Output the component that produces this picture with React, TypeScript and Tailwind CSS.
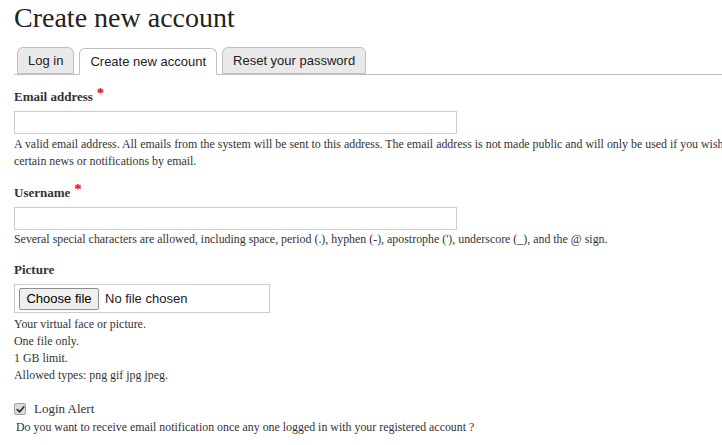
import React from 'react';

const serif = { fontFamily: '"Liberation Serif", "Times New Roman", serif' };

const Label: React.FC<{ text: string; required?: boolean }> = ({ text, required }) => (
  <div className="text-[13px] leading-[18px] font-bold text-[#333]">
    {text}
    {required && <span className="ml-[4px] text-[15px] text-[#e00] relative top-[-3px]">*</span>}
  </div>
);

const Tab: React.FC<{ label: string; active?: boolean }> = ({ label, active }) => (
  <div
    className={
      'h-[27px] px-[10px] flex items-center rounded-t-[6px] border border-[#bfbfbf] text-[13px] text-[#222] ' +
      (active ? 'bg-white border-b-white relative top-[1px]' : 'bg-[#e9e9e9]')
    }
    style={{ fontFamily: '"Liberation Sans", Arial, sans-serif' }}
  >
    {label}
  </div>
);

export default function App() {
  return (
    <div className="w-[722px] h-[445px] overflow-hidden bg-white text-[#333]" style={serif}>
      <div className="w-[955px] pl-[14px]">
        <h1 className="text-[28px] leading-[31px] text-[#222] pt-[2px]">Create new account</h1>

        <div className="mt-[15px] flex items-end gap-[5px] pl-[3px] border-b border-[#bfbfbf] h-[27px]">
          <Tab label="Log in" />
          <Tab label="Create new account" active />
          <Tab label="Reset your password" />
        </div>

        <div className="mt-[12px]">
          <Label text="Email address" required />
          <input type="text" className="mt-[5px] block w-[443px] h-[23px] border border-[#ccc] outline-none" />
          <p className="text-[11.9px] leading-[17px] mt-[2px]">
            A valid email address. All emails from the system will be sent to this address. The email address is not made public and will only be used if you wish to receive a new password or wish to receive certain news or notifications by email.
          </p>
        </div>

        <div className="mt-[13px]">
          <Label text="Username" required />
          <input type="text" className="mt-[5px] block w-[443px] h-[23px] border border-[#ccc] outline-none" />
          <p className="text-[11.9px] leading-[17px] mt-[1px]">
            Several special characters are allowed, including space, period (.), hyphen (-), apostrophe ('), underscore (_), and the @ sign.
          </p>
        </div>

        <div className="mt-[13px]">
          <Label text="Picture" />
          <div
            className="mt-[5px] w-[256px] h-[29px] border border-[#ccc] flex items-center pl-[4px] gap-[6px] text-[13px] text-[#222]"
            style={{ fontFamily: '"Liberation Sans", Arial, sans-serif' }}
          >
            <div className="h-[22px] w-[80px] flex items-center justify-center bg-[#efefef] border border-[#8f8f8f] rounded-[2px] text-[13px] text-black">
              Choose file
            </div>
            <span>No file chosen</span>
          </div>
          <div className="text-[11.9px] leading-[17px] mt-[3px]">
            <div>Your virtual face or picture.</div>
            <div>One file only.</div>
            <div>1 GB limit.</div>
            <div>Allowed types: png gif jpg jpeg.</div>
          </div>
        </div>

        <div className="mt-[16px] flex items-center gap-[8px]">
          <span className="w-[12px] h-[12px] rounded-[2px] bg-[#dcdcdc] border border-[#a0a0a0] flex items-center justify-center">
            <svg width="9" height="9" viewBox="0 0 10 10">
              <path d="M1.5 5.2 L4 7.6 L8.6 2.2" fill="none" stroke="#333" strokeWidth="2" strokeLinecap="round" strokeLinejoin="round" />
            </svg>
          </span>
          <span className="text-[13px] leading-[18px] text-[#333]">Login Alert</span>
        </div>
        <p className="text-[11.9px] leading-[17px] mt-[1px] pl-[2px]">
          Do you want to receive email notification once any one logged in with your registered account ?
        </p>
      </div>
    </div>
  );
}
